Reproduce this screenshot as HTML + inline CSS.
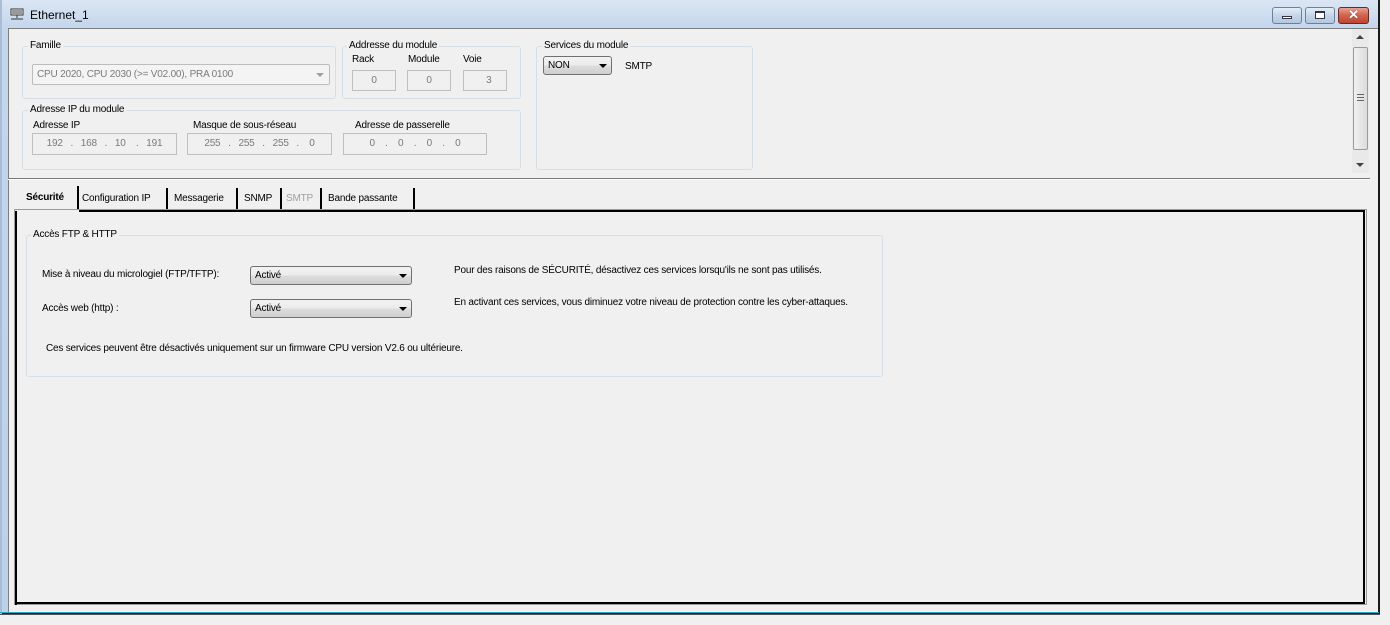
<!DOCTYPE html>
<html><head><meta charset="utf-8"><style>
*{margin:0;padding:0;box-sizing:border-box}
body{width:1390px;height:625px;background:#f0f0f0;font-family:"Liberation Sans",sans-serif;font-size:10px;color:#000;position:relative;overflow:hidden;letter-spacing:-0.2px}
.a{position:absolute}
.gb{position:absolute;border:1px solid #d5dfe5;border-radius:3px}
.gl{position:absolute;background:#f0f0f0;padding:0 2px;top:-7px;left:5px;white-space:nowrap}
.tb{position:absolute;border:1px solid #bfbfbf;background:#f0f0f0;color:#7a7a7a;text-align:center;line-height:19px}
.cb{position:absolute;border:1px solid #707070;border-radius:3px;background:linear-gradient(#f2f2f2,#ebebeb 50%,#dddddd 51%,#cfcfcf);padding-left:4px;line-height:18px}
.arr{position:absolute;right:4px;top:7px;width:0;height:0;border-left:4px solid transparent;border-right:4px solid transparent;border-top:4px solid #000}
.tab{position:absolute;top:188px;height:22px;line-height:22px;padding-left:4px;border-right:2px solid #000;white-space:nowrap}
</style></head><body>
<div class="a" style="left:0;top:0;width:1379px;height:614px;background:linear-gradient(#dbe6f3,#c3d6ec 28px,#bcd2ea);border-right:1px solid #2aa7c9;border-bottom:2px solid #1a1a1a"></div>
<div class="a" style="left:1378px;top:0;width:2px;height:614px;background:#1a1a1a"></div>
<div class="a" style="left:0;top:0;width:2px;height:614px;background:#a9bdd6"></div>
<div class="a" style="left:0;top:612px;width:1379px;height:1px;background:#2aa7c9"></div>
<svg class="a" style="left:10px;top:8px" width="15" height="13" viewBox="0 0 15 13"><rect x="1" y="1" width="12" height="6" fill="#fff" stroke="#333"/><path d="M3 2v4M5 2v4M7 2v4M9 2v4M11 2v4" stroke="#333"/><path d="M7 7v3M1 11h12" stroke="#333"/></svg>
<div class="a" style="left:30px;top:8px;font-size:12px;letter-spacing:0">Ethernet_1</div>
<div class="a" style="left:1272px;top:7px;width:30px;height:17px;border:1px solid #6d7f9a;border-radius:3px;background:linear-gradient(#e4edf7,#c5d5e8 50%,#b3c7df)"><div class="a" style="left:9px;top:8px;width:10px;height:3px;border:1px solid #334;background:#fff"></div></div>
<div class="a" style="left:1305px;top:7px;width:30px;height:17px;border:1px solid #6d7f9a;border-radius:3px;background:linear-gradient(#e4edf7,#c5d5e8 50%,#b3c7df)"><div class="a" style="left:9px;top:3px;width:10px;height:8px;border:1px solid #334;border-top-width:2px;background:#fff"></div></div>
<div class="a" style="left:1338px;top:7px;width:31px;height:17px;border:1px solid #6a2a22;border-radius:3px;background:linear-gradient(#e8a194,#d0614d 50%,#c04530)"><div class="a" style="left:0;top:-1px;width:29px;text-align:center;color:#fff;font-weight:bold;font-size:13px;text-shadow:0 0 1px #333">✕</div></div>
<div class="a" style="left:8px;top:28px;width:1370px;height:584px;background:#f0f0f0;border-top:1px solid #7e7e7e;border-left:1px solid #7e7e7e"></div>
<div class="a" style="left:1352px;top:29px;width:17px;height:144px;background:#e9e9e9"></div>
<div class="a" style="left:1356px;top:35px;border-left:4px solid transparent;border-right:4px solid transparent;border-bottom:4px solid #444"></div>
<div class="a" style="left:1356px;top:163px;border-left:4px solid transparent;border-right:4px solid transparent;border-top:4px solid #444"></div>
<div class="a" style="left:1353px;top:47px;width:15px;height:103px;border:1px solid #9a9a9a;border-radius:2px;background:linear-gradient(90deg,#f0f0f0,#dcdcdc)"></div>
<div class="a" style="left:1357px;top:94px;width:7px;height:7px;border-top:1px solid #666;border-bottom:1px solid #666"><div style="margin-top:2px;border-top:1px solid #666"></div></div>
<div class="a" style="left:8px;top:178px;width:1362px;height:2px;background:#777;border-bottom:1px solid #fff"></div>
<div class="gb" style="left:22px;top:46px;width:314px;height:53px"><span class="gl">Famille</span></div>
<div class="a" style="left:32px;top:64px;width:298px;height:21px;border:1px solid #bcbcbc;border-radius:2px;color:#7a7a7a;padding:4px 0 0 4px;background:#f4f4f4">CPU 2020, CPU 2030 (&gt;= V02.00), PRA 0100</div>
<div class="a" style="left:316px;top:73px;border-left:4px solid transparent;border-right:4px solid transparent;border-top:4px solid #a0a0a0"></div>
<div class="gb" style="left:342px;top:46px;width:179px;height:53px"><span class="gl" style="left:4px">Addresse du module</span></div>
<div class="a" style="left:352px;top:54px">Rack</div>
<div class="a" style="left:408px;top:54px">Module</div>
<div class="a" style="left:463px;top:54px">Voie</div>
<div class="tb" style="left:352px;top:70px;width:44px;height:21px">0</div>
<div class="tb" style="left:407px;top:70px;width:44px;height:21px">0</div>
<div class="tb" style="left:463px;top:70px;width:44px;height:21px">&nbsp;&nbsp;&nbsp;3</div>
<div class="gb" style="left:22px;top:110px;width:499px;height:60px"><span class="gl">Adresse IP du module</span></div>
<div class="a" style="left:33px;top:120px">Adresse IP</div>
<div class="a" style="left:193px;top:120px">Masque de sous-réseau</div>
<div class="a" style="left:355px;top:120px">Adresse de passerelle</div>
<div class="tb" style="left:32px;top:133px;width:145px;height:22px">192&nbsp;&nbsp;&nbsp;.&nbsp;&nbsp;&nbsp;168&nbsp;&nbsp;&nbsp;.&nbsp;&nbsp;&nbsp;10&nbsp;&nbsp;&nbsp;&nbsp;.&nbsp;&nbsp;&nbsp;191</div>
<div class="tb" style="left:187px;top:133px;width:145px;height:22px">255&nbsp;&nbsp;&nbsp;.&nbsp;&nbsp;&nbsp;255&nbsp;&nbsp;&nbsp;.&nbsp;&nbsp;&nbsp;255&nbsp;&nbsp;&nbsp;.&nbsp;&nbsp;&nbsp;&nbsp;0</div>
<div class="tb" style="left:343px;top:133px;width:144px;height:22px">0&nbsp;&nbsp;&nbsp;&nbsp;.&nbsp;&nbsp;&nbsp;&nbsp;0&nbsp;&nbsp;&nbsp;&nbsp;.&nbsp;&nbsp;&nbsp;&nbsp;0&nbsp;&nbsp;&nbsp;&nbsp;.&nbsp;&nbsp;&nbsp;&nbsp;0</div>
<div class="gb" style="left:536px;top:46px;width:217px;height:124px"><span class="gl" style="left:5px">Services du module</span></div>
<div class="cb" style="left:543px;top:56px;width:69px;height:19px">NON<div class="arr"></div></div>
<div class="a" style="left:625px;top:61px">SMTP</div>
<div class="a" style="left:18px;top:185px;width:60px;height:26px;background:#f0f0f0"></div>
<div class="a" style="left:26px;top:192px;font-weight:bold">Sécurité</div>
<div class="a" style="left:77px;top:186px;width:2px;height:24px;background:#000"></div>
<div class="tab" style="left:78px;width:90px">Configuration IP</div>
<div class="tab" style="left:170px;width:68px">Messagerie</div>
<div class="tab" style="left:240px;width:42px">SNMP</div>
<div class="tab" style="left:282px;width:40px;color:#a0a0a0">SMTP</div>
<div class="tab" style="left:324px;width:91px">Bande passante</div>
<div class="a" style="left:14px;top:209px;width:1353px;height:396px;border:1px solid #9a9a9a;background:#f0f0f0"></div>
<div class="a" style="left:79px;top:210px;width:1286px;height:2px;background:#000"></div>
<div class="a" style="left:15px;top:211px;width:2px;height:394px;background:#000"></div>
<div class="a" style="left:1363px;top:211px;width:2px;height:393px;background:#000"></div>
<div class="a" style="left:15px;top:602px;width:1350px;height:2px;background:#000"></div>
<div class="a" style="left:17px;top:212px;width:1346px;height:390px;background:#f0f0f0"></div>
<div class="a" style="left:17px;top:210px;width:61px;height:3px;background:#f0f0f0"></div>
<div class="gb" style="left:26px;top:235px;width:857px;height:142px"><span class="gl" style="left:4px">Accès FTP &amp; HTTP</span></div>
<div class="a" style="left:42px;top:269px">Mise à niveau du micrologiel (FTP/TFTP):</div>
<div class="a" style="left:42px;top:303px">Accès web (http) :</div>
<div class="cb" style="left:250px;top:266px;width:162px;height:19px">Activé<div class="arr"></div></div>
<div class="cb" style="left:250px;top:299px;width:162px;height:19px">Activé<div class="arr"></div></div>
<div class="a" style="left:454px;top:265px">Pour des raisons de SÉCURITÉ, désactivez ces services lorsqu'ils ne sont pas utilisés.</div>
<div class="a" style="left:454px;top:297px">En activant ces services, vous diminuez votre niveau de protection contre les cyber-attaques.</div>
<div class="a" style="left:46px;top:343px">Ces services peuvent être désactivés uniquement sur un firmware CPU version V2.6 ou ultérieure.</div>
<div class="a" style="left:0;top:615px;width:1390px;height:10px;background:#f0f0f0"></div>
<div class="a" style="left:0;top:614px;width:1380px;height:1px;background:#555"></div>
</body></html>
